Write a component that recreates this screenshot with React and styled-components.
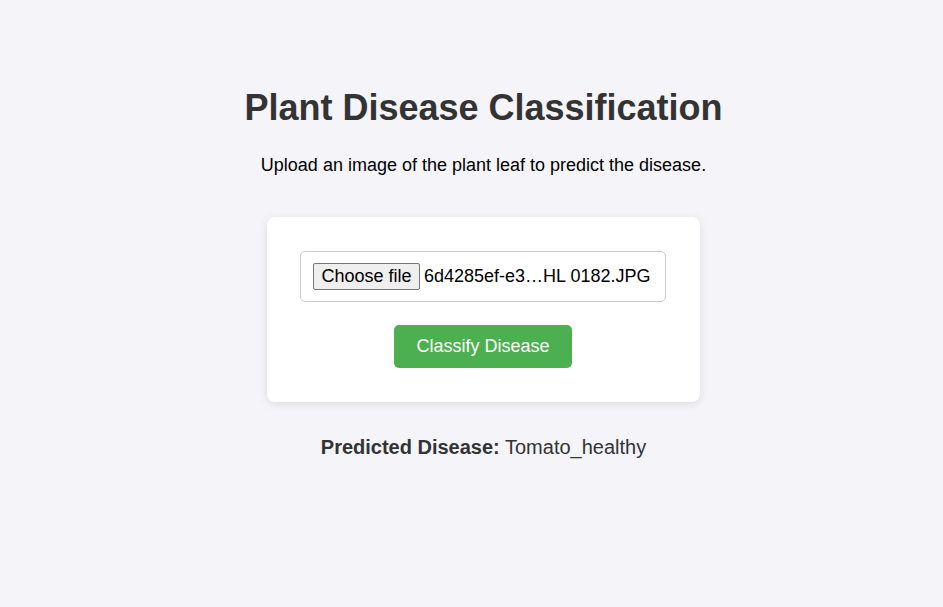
import React from "react";
import styled, { createGlobalStyle } from "styled-components";

const Global = createGlobalStyle`
  html, body { margin: 0; padding: 0; }
  body {
    background: #f4f4f9;
    font-family: Arial, "Liberation Sans", sans-serif;
    color: #333;
    width: 943px;
    height: 607px;
    overflow: hidden;
  }
`;

const Page = styled.main`
  display: flex;
  flex-direction: column;
  align-items: center;
  padding: 87px 0 0 24px;
  text-align: center;
`;

const Title = styled.h1`
  margin: 0;
  font-size: 36px;
  font-weight: bold;
  color: #333;
  line-height: 41px;
`;

const Subtitle = styled.p`
  margin: 27px 0 0;
  font-size: 18px;
  line-height: 21px;
  color: #000;
`;

const Card = styled.form`
  margin-top: 41px;
  width: 433px;
  box-sizing: border-box;
  background: #fff;
  border-radius: 8px;
  box-shadow: 0 2px 10px rgba(0, 0, 0, 0.1);
  padding: 34px 1px 34px 0;
  display: flex;
  flex-direction: column;
  align-items: center;
`;

const FileRow = styled.div`
  width: 366px;
  height: 51px;
  box-sizing: border-box;
  border: 1px solid #ccc;
  border-radius: 5px;
  display: flex;
  align-items: center;
  padding: 0 12px;
  gap: 4px;
  font-size: 18px;
  color: #000;
`;

const ChooseButton = styled.span`
  display: inline-flex;
  align-items: center;
  justify-content: center;
  box-sizing: border-box;
  width: 107px;
  height: 27px;
  background: #efefef;
  border: 1px solid #767676;
  border-radius: 2px;
  font-size: 18px;
  color: #000;
`;

const FileName = styled.span`
  white-space: nowrap;
`;

const Submit = styled.button`
  margin-top: 23px;
  width: 178px;
  height: 43px;
  background: #4caf50;
  color: #fff;
  border: none;
  border-radius: 5px;
  font-size: 18px;
  font-family: Arial, "Liberation Sans", sans-serif;
  cursor: pointer;
`;

const Result = styled.p`
  margin: 34px 0 0;
  font-size: 20px;
  line-height: 23px;
  color: #333;
`;

export default function App() {
  return (
    <>
      <Global />
      <Page>
        <Title>Plant Disease Classification</Title>
        <Subtitle>Upload an image of the plant leaf to predict the disease.</Subtitle>
        <Card onSubmit={(e) => e.preventDefault()}>
          <FileRow>
            <ChooseButton>Choose file</ChooseButton>
            <FileName>6d4285ef-e3…HL 0182.JPG</FileName>
          </FileRow>
          <Submit type="submit">Classify Disease</Submit>
        </Card>
        <Result>
          <strong>Predicted Disease:</strong> Tomato_healthy
        </Result>
      </Page>
    </>
  );
}
